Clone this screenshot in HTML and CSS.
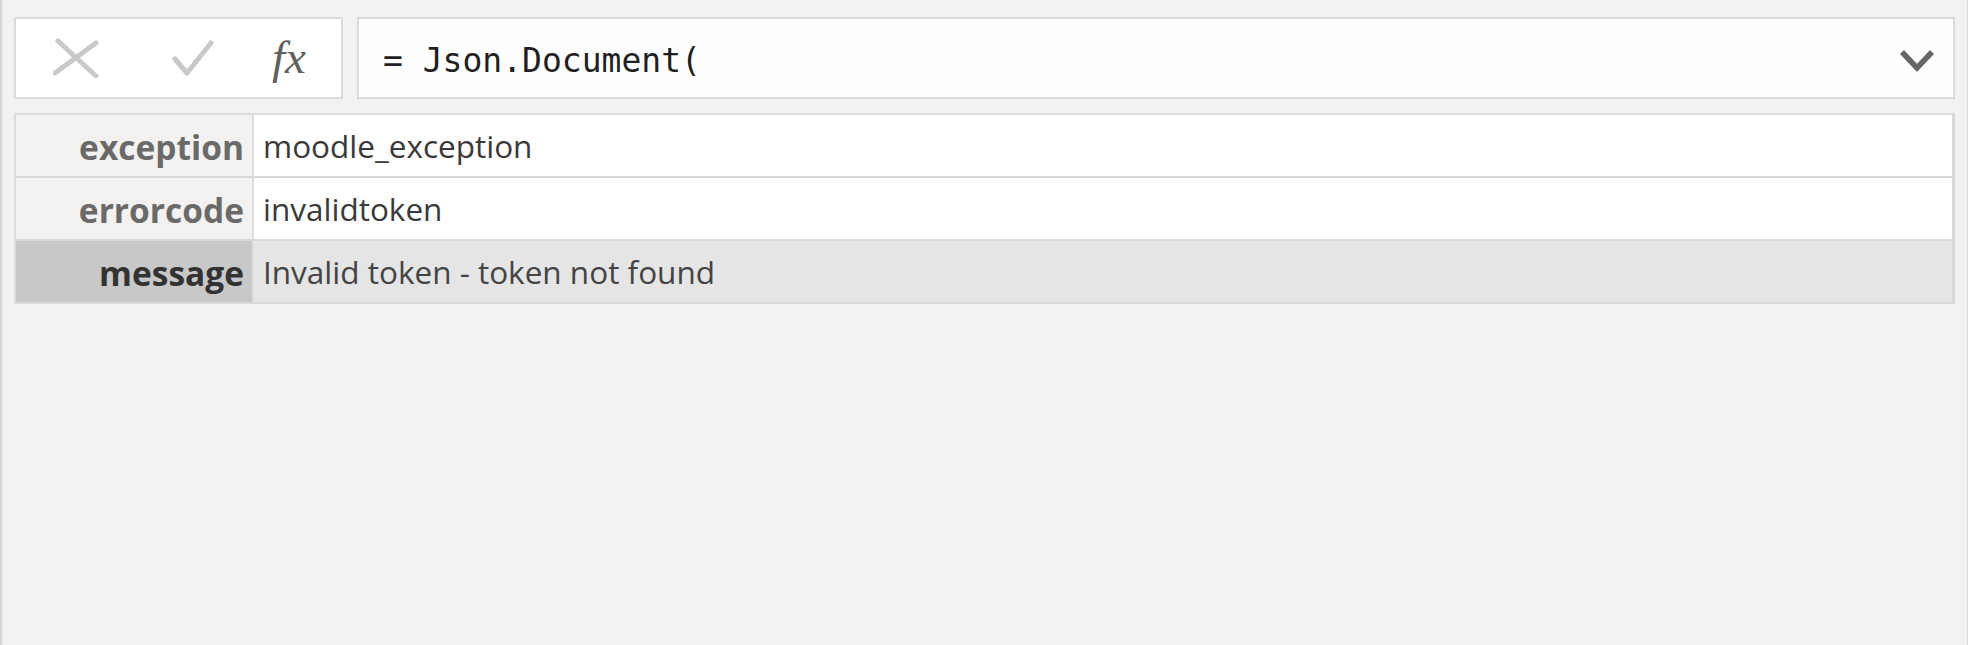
FILE: index.html
```html
<!DOCTYPE html>
<html lang="en">
<head>
<meta charset="utf-8">
<title>Json.Document</title>
<link rel="stylesheet" href="styles.css">
</head>
<body>
<div class="pane">
  <div class="formula-row">
    <div class="toolbox">
      <svg class="icon-cancel" viewBox="0 0 46 40" aria-label="Cancel">
        <path d="M5 3 L43 38 M2 35 L43 5" fill="none" stroke="#c9c9c9" stroke-width="5" stroke-linecap="round"/>
      </svg>
      <svg class="icon-commit" viewBox="0 0 42 38" aria-label="Commit">
        <path d="M3 20 L15 34 L39 4" fill="none" stroke="#c9c9c9" stroke-width="5" stroke-linecap="round" stroke-linejoin="round"/>
      </svg>
      <span class="fx">fx</span>
    </div>
    <div class="formula-bar">
      <span class="formula-text">= Json.Document(</span>
      <svg class="chevron" viewBox="0 0 36 26" aria-label="Expand">
        <path d="M3 5 L18 21 L33 5" fill="none" stroke="#666666" stroke-width="5.5"/>
      </svg>
    </div>
  </div>

  <div class="record">
    <div class="rec-row">
      <div class="rec-label">exception</div>
      <div class="rec-value">moodle_exception</div>
    </div>
    <div class="rec-row">
      <div class="rec-label">errorcode</div>
      <div class="rec-value">invalidtoken</div>
    </div>
    <div class="rec-row is-selected">
      <div class="rec-label">message</div>
      <div class="rec-value">Invalid token - token not found</div>
    </div>
  </div>
</div>
</body>
</html>
```

FILE: styles.css
```css
html, body {
  margin: 0;
  padding: 0;
  background: #f3f2f1;
}

.pane {
  box-sizing: border-box;
  height: 645px;
  border-left: 2px solid #d6d6d6;
  border-right: 1px solid #dadada;
  padding: 17px 12px 0 12px;
  display: flex;
  flex-direction: column;
  gap: 14px;
}

.formula-row {
  display: flex;
  gap: 14px;
  height: 82px;
}

.toolbox {
  box-sizing: border-box;
  width: 329px;
  height: 82px;
  flex: none;
  border: 2px solid #dadada;
  background: #ffffff;
  display: flex;
  align-items: center;
  padding-left: 37px;
}

.icon-cancel {
  width: 46px;
  height: 40px;
  flex: none;
}

.icon-commit {
  width: 42px;
  height: 38px;
  margin-left: 73px;
  flex: none;
}

.fx {
  margin-left: 58px;
  font-family: "Liberation Serif", "DejaVu Serif", serif;
  font-style: italic;
  font-size: 47px;
  line-height: 1;
  color: #606060;
  padding-bottom: 2px;
}

.formula-bar {
  box-sizing: border-box;
  flex: 1;
  height: 82px;
  border: 2px solid #dadada;
  background: #fefefe;
  display: flex;
  align-items: center;
  padding: 4px 18px 0 24px;
}

.formula-text {
  flex: 1;
  font-family: "DejaVu Sans Mono", "Liberation Mono", monospace;
  font-size: 33px;
  color: #1f1f1f;
  white-space: pre;
}

.chevron {
  width: 36px;
  height: 26px;
  flex: none;
}

.record {
  border-top: 2px solid #dcdcdc;
  border-left: 2px solid #dcdcdc;
  border-right: 3px solid #d8d8d8;
}

.rec-row {
  display: flex;
  height: 63px;
  box-sizing: border-box;
  border-bottom: 2px solid #d9d9d9;
}

.rec-label {
  box-sizing: border-box;
  width: 238px;
  flex: none;
  background: #f3f2f1;
  border-right: 2px solid #dddddd;
  display: flex;
  align-items: center;
  justify-content: flex-end;
  padding-right: 8px;
  padding-top: 2px;
  font-family: "Open Sans", "Noto Sans", sans-serif;
  font-weight: 700;
  font-size: 33.5px;
  color: #6a6a6a;
}

.rec-value {
  flex: 1;
  background: #ffffff;
  display: flex;
  align-items: center;
  padding-left: 9px;
  font-family: "Open Sans", "Noto Sans", sans-serif;
  font-size: 31.5px;
  color: #3a3a3a;
}

.rec-row.is-selected .rec-label {
  background: #c8c8c8;
  color: #333333;
}

.rec-row.is-selected .rec-value {
  background: #e5e5e5;
  color: #444444;
}
```
